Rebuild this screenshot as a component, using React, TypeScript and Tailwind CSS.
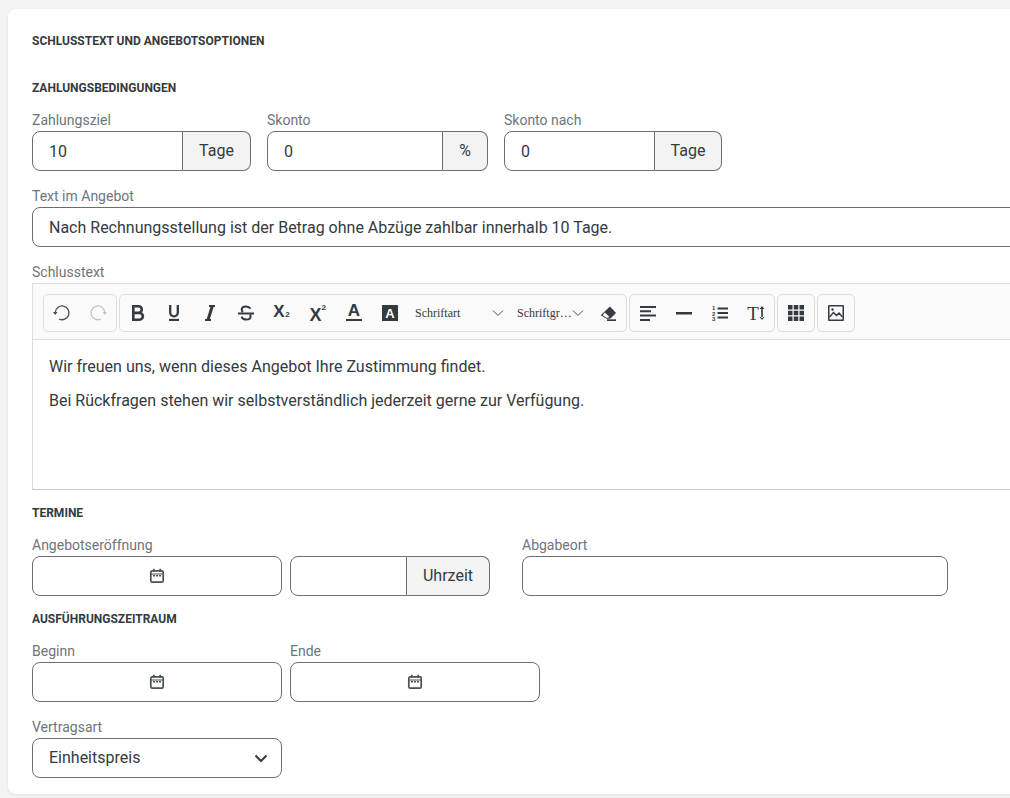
import React from "react";

const Btn = ({ children }: { children: React.ReactNode }) => (
  <div className="w-9 h-9 flex items-center justify-center shrink-0">{children}</div>
);

const Group = ({ children }: { children: React.ReactNode }) => (
  <div className="flex h-[38px] border border-[#dedede] rounded-[5px] shrink-0">{children}</div>
);

const Cal = () => (
  <svg width="16" height="16" viewBox="0 0 16 16" fill="none" stroke="#495057" strokeWidth="1.7">
    <rect x="1.8" y="2.8" width="12.4" height="11.4" rx="1.5" />
    <path d="M4.8 0.8v3M11.2 0.8v3" />
    <path d="M2 6h12" strokeWidth="1" />
    <path d="M4 7.8h2M7 7.8h2M10 7.8h2" strokeWidth="1.4" />
  </svg>
);

const Heading = ({ children, className = "" }: { children: React.ReactNode; className?: string }) => (
  <div className={`text-xs leading-[18px] font-bold text-[#343a40] ${className}`}>{children}</div>
);

const Label = ({ children }: { children: React.ReactNode }) => (
  <div className="text-sm leading-[21px] text-[#6c757d]">{children}</div>
);

const Field = ({ label, children, className = "" }: { label: string; children: React.ReactNode; className?: string }) => (
  <div className={`shrink-0 ${className}`}>
    <Label>{label}</Label>
    {children}
  </div>
);

const Box = "h-10 border border-[#6e6e6e] bg-white text-base leading-[40px] text-[#343a40] px-4";

const InputAddon = ({ value, addon, iw, aw }: { value?: string; addon: string; iw: string; aw: string }) => (
  <div className="flex h-10">
    <div className={`${Box} rounded-l-lg ${iw}`}>{value}</div>
    <div className={`h-10 border border-l-0 border-[#6e6e6e] bg-[#f3f3f3] rounded-r-lg flex items-center justify-center text-base text-[#343a40] ${aw}`}>{addon}</div>
  </div>
);

const DateInput = () => (
  <div className="h-10 w-[250px] border border-[#6e6e6e] rounded-lg bg-white flex items-center justify-center"><Cal /></div>
);

const Chevron = () => (
  <svg width="12" height="12" viewBox="0 0 12 12" fill="none" stroke="#495057" strokeWidth="1"><path d="M1 3.5l5 5 5-5" /></svg>
);

const Stroke16 = ({ children, w = 2 }: { children: React.ReactNode; w?: number }) => (
  <svg width="16" height="16" viewBox="0 0 16 16" fill="none" stroke="#343a40" strokeWidth={w}>{children}</svg>
);

const sans = { fontFamily: "'Liberation Sans', sans-serif" };
const serif = { fontFamily: "'Liberation Serif', serif" };

export default function App() {
  return (
    <div className="w-[1010px] h-[798px] overflow-hidden bg-[#f3f3f3] pt-[9px] pl-2" style={{ fontFamily: "Roboto, sans-serif" }}>
      <div className="w-[1100px] h-[785px] bg-white rounded-[8px] shadow-[0_1px_3px_rgba(0,0,0,0.08)] pl-6 pr-6 pt-[23px]">
        <Heading>SCHLUSSTEXT UND ANGEBOTSOPTIONEN</Heading>
        <Heading className="mt-[29px]">ZAHLUNGSBEDINGUNGEN</Heading>

        <div className="flex gap-4 mt-[13px]">
          <Field label="Zahlungsziel"><InputAddon value="10" addon="Tage" iw="w-[151px]" aw="w-[68px]" /></Field>
          <Field label="Skonto"><InputAddon value="0" addon="%" iw="w-[176px]" aw="w-[45px]" /></Field>
          <Field label="Skonto nach"><InputAddon value="0" addon="Tage" iw="w-[151px]" aw="w-[67px]" /></Field>
        </div>

        <div className="mt-[15px]">
          <Label>Text im Angebot</Label>
          <div className={`${Box} rounded-lg`}>Nach Rechnungsstellung ist der Betrag ohne Abzüge zahlbar innerhalb 10 Tage.</div>
        </div>

        <div className="mt-[15px]">
          <Label>Schlusstext</Label>
          <div className="h-[207px] border border-[#dddddd] border-b-[#c8c8c8]">
            <div className="h-[56px] bg-[#fafafa] border-b border-[#dddddd] flex items-start gap-0.5 pl-2.5 pt-2.5">
              <Group>
                <Btn>
                  <svg width="18" height="18" viewBox="0 0 18 18" fill="none" stroke="#495057" strokeWidth="1.3"><path d="M2.200 8.500A6.900 6.900 0 1 1 6 15" /><path d="M0 8l4.500 0-2.300 3z" fill="#495057" stroke="none" /></svg>
                </Btn>
                <Btn>
                  <svg width="18" height="18" viewBox="0 0 18 18" fill="none" stroke="#c4c4c4" strokeWidth="1.3"><path d="M15.800 8.500A6.900 6.900 0 1 0 12 15" /><path d="M18 8l-4.500 0 2.300 3z" fill="#c4c4c4" stroke="none" /></svg>
                </Btn>
              </Group>
              <Group>
                <Btn><Stroke16 w={2.6}><path d="M3.300 1.300h5.200a3.300 3.300 0 0 1 0 6.600H3.300zM3.300 7.900h6.200a3.400 3.400 0 0 1 0 6.800H3.300z" /></Stroke16></Btn>
                <Btn><Stroke16 w={2.3}><path d="M4.200 0v7.500a3.800 3.800 0 0 0 7.600 0V0" /><path d="M3 15h10" /></Stroke16></Btn>
                <Btn><Stroke16 w={2.2}><path d="M7 1h6M3 15h6" /><path d="M10.300 1L6 15" strokeWidth="3" /></Stroke16></Btn>
                <Btn><Stroke16 w={2}><path d="M12.500 3.600C11.600 2.200 10 1.400 8 1.400 5.500 1.400 3.700 2.800 3.700 4.700c0 1 .5 1.800 1.300 2.400M3.500 11.800c.8 1.700 2.500 2.800 4.700 2.800 2.600 0 4.400-1.400 4.400-3.300 0-.7-.2-1.300-.6-1.900" /><path d="M0 8.500h16" /></Stroke16></Btn>
                <Btn>
                  <span className="relative text-[17px] leading-none font-bold text-[#343a40] -mt-[3px] -ml-[6px]" style={sans}>X<span className="absolute left-[12px] top-[8px] text-[8px] font-bold">2</span></span>
                </Btn>
                <Btn>
                  <span className="relative text-[18px] leading-none font-bold text-[#343a40] mt-[3px] -ml-[5px]" style={sans}>X<span className="absolute left-[12px] -top-[2px] text-[8px] font-bold">2</span></span>
                </Btn>
                <Btn>
                  <div className="flex flex-col items-center w-4">
                    <span className="text-[17px] leading-[12px] font-bold text-[#343a40]" style={sans}>A</span>
                    <span className="w-4 h-[2.500px] bg-[#343a40] mt-[1.500px]" />
                  </div>
                </Btn>
                <Btn>
                  <div className="w-4 h-4 bg-[#343a40] flex items-center justify-center text-[13px] leading-none font-bold text-white" style={sans}>A</div>
                </Btn>
                <div className="w-[108px] h-9 flex items-center justify-between pl-[7px] pr-[12px] shrink-0 text-xs text-[#343a40]" style={serif}>
                  <span>Schriftart</span>
                  <Chevron />
                </div>
                <div className="w-[74px] h-9 flex items-center justify-between pl-px pr-[6px] shrink-0 text-xs text-[#343a40]" style={serif}>
                  <span>Schriftgr…</span>
                  <Chevron />
                </div>
                <Btn>
                  <svg width="16" height="16" viewBox="0 0 16 16"><path d="M10 1.500L16 8 10.500 13.500 7 14 .7 10.300z" fill="#343a40" /><path d="M4.800 7.500L9.500 12 6.900 12.900 2.700 10.300z" fill="#fff" /><path d="M7 14.300h9V16H7z" fill="#343a40" /></svg>
                </Btn>
              </Group>
              <Group>
                <Btn>
                  <svg width="16" height="15" viewBox="0 0 16 15" fill="#343a40"><path d="M0 0h16v2H0zM0 4.300h11v2H0zM0 8.600h16v2H0zM0 13h10v2H0z" /></svg>
                </Btn>
                <Btn><svg width="16" height="3" viewBox="0 0 16 3" fill="#343a40"><rect width="16" height="2.500" /></svg></Btn>
                <Btn>
                  <svg width="16" height="16" viewBox="0 0 16 16" fill="#343a40">
                    <path d="M5.500 2.500H16v2H5.500zM5.500 7H16v2H5.500zM5.500 11.500H16v2H5.500z" />
                    <text x="0" y="5" fontSize="6" fontWeight="700" fontFamily="Liberation Sans">1</text>
                    <text x="0" y="10.500" fontSize="6" fontWeight="700" fontFamily="Liberation Sans">2</text>
                    <text x="0" y="16" fontSize="6" fontWeight="700" fontFamily="Liberation Sans">3</text>
                  </svg>
                </Btn>
                <Btn>
                  <span className="flex items-center text-[#343a40]" style={serif}>
                    <span className="text-[19px] leading-none">T</span>
                    <svg width="6" height="14" viewBox="0 0 6 14" fill="#343a40"><path d="M2.200 2h1.600v10H2.200zM3 0l2.400 3H.6zM3 14l2.400-3H.6z" /></svg>
                  </span>
                </Btn>
              </Group>
              <Group>
                <Btn>
                  <svg width="16" height="16" viewBox="0 0 16 16" fill="#343a40"><path d="M0 0h4.500v4.500H0zM5.750 0h4.500v4.500h-4.500zM11.500 0H16v4.500h-4.500zM0 5.750h4.500v4.500H0zM5.750 5.750h4.500v4.500h-4.500zM11.500 5.750H16v4.500h-4.500zM0 11.500h4.500V16H0zM5.750 11.500h4.500V16h-4.500zM11.500 11.500H16V16h-4.500z" /></svg>
                </Btn>
              </Group>
              <Group>
                <Btn>
                  <svg width="16" height="16" viewBox="0 0 16 16" fill="none" stroke="#343a40" strokeWidth="1.500"><rect x=".75" y=".75" width="14.500" height="14.500" rx=".5" /><path d="M1.500 12l4-4.500 3 3 2.500-2.500 3.500 4" /><circle cx="4.500" cy="4.500" r="1.200" fill="#343a40" stroke="none" /></svg>
                </Btn>
              </Group>
            </div>
            <div className="pl-4 pt-[15px] text-base leading-6 text-[#343a40]">
              <p className="mb-2.5">Wir freuen uns, wenn dieses Angebot Ihre Zustimmung findet.</p>
              <p>Bei Rückfragen stehen wir selbstverständlich jederzeit gerne zur Verfügung.</p>
            </div>
          </div>
        </div>

        <Heading className="mt-[14px]">TERMINE</Heading>
        <div className="flex mt-[13px]">
          <Field label="Angebotseröffnung"><DateInput /></Field>
          <div className="ml-2 pt-[21px]"><InputAddon addon="Uhrzeit" iw="w-[117px]" aw="w-[83px]" /></div>
          <Field label="Abgabeort" className="ml-8">
            <div className="h-10 w-[426px] border border-[#6e6e6e] rounded-lg bg-white" />
          </Field>
        </div>

        <Heading className="mt-[14px]">AUSFÜHRUNGSZEITRAUM</Heading>
        <div className="flex gap-2 mt-[13px]">
          <Field label="Beginn"><DateInput /></Field>
          <Field label="Ende"><DateInput /></Field>
        </div>

        <Field label="Vertragsart" className="mt-[15px]">
          <div className="h-10 w-[250px] border border-[#6e6e6e] rounded-lg bg-white flex items-center justify-between pl-4 pr-[13px] text-base text-[#343a40]">
            <span>Einheitspreis</span>
            <svg width="14" height="14" viewBox="0 0 14 14" fill="none" stroke="#343a40" strokeWidth="2"><path d="M1.500 4.500L7 10l5.500-5.500" /></svg>
          </div>
        </Field>
      </div>
    </div>
  );
}
